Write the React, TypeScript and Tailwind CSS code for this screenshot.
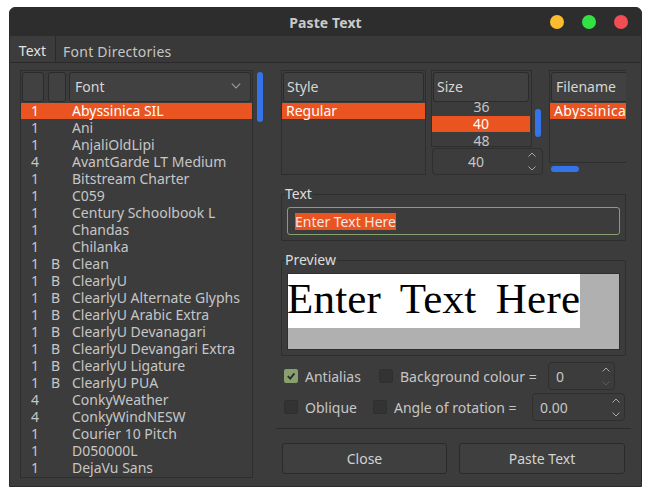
const fonts: [string, string, string][] = [
  ['1', '', 'Abyssinica SIL'],
  ['1', '', 'Ani'],
  ['1', '', 'AnjaliOldLipi'],
  ['4', '', 'AvantGarde LT Medium'],
  ['1', '', 'Bitstream Charter'],
  ['1', '', 'C059'],
  ['1', '', 'Century Schoolbook L'],
  ['1', '', 'Chandas'],
  ['1', '', 'Chilanka'],
  ['1', 'B', 'Clean'],
  ['1', 'B', 'ClearlyU'],
  ['1', 'B', 'ClearlyU Alternate Glyphs'],
  ['1', 'B', 'ClearlyU Arabic Extra'],
  ['1', 'B', 'ClearlyU Devanagari'],
  ['1', 'B', 'ClearlyU Devangari Extra'],
  ['1', 'B', 'ClearlyU Ligature'],
  ['1', 'B', 'ClearlyU PUA'],
  ['4', '', 'ConkyWeather'],
  ['4', '', 'ConkyWindNESW'],
  ['1', '', 'Courier 10 Pitch'],
  ['1', '', 'D050000L'],
  ['1', '', 'DejaVu Sans'],
];

const Chevron = ({ up, className }: { up?: boolean; className?: string }) => (
  <svg width="8" height="5" viewBox="0 0 8 5" fill="none" stroke="currentColor" strokeWidth="1" className={className}>
    <path d={up ? 'M.5 4.5 4 1 7.5 4.5' : 'M.5 .5 4 4 7.5 .5'} />
  </svg>
);

const Header = ({ label, className }: { label?: string; className: string }) => (
  <div className={`h-[30px] shrink-0 rounded-[3px] border border-[#2b2b2b] bg-[#414141] leading-[28px] text-[#d6d6d6] ${className}`}>
    {label}
  </div>
);

const Spin = ({ value, className, dim }: { value: string; className: string; dim?: boolean }) => (
  <div className={`flex items-center justify-between rounded-[4px] border border-[#2f2f2f] bg-[#3c3c3c] ${className}`}>
    <span>{value}</span>
    <div className="flex flex-col gap-[9px]">
      <Chevron up className="text-[#a8a8a8]" />
      <Chevron className={dim ? 'text-[#5c5c5c]' : 'text-[#a8a8a8]'} />
    </div>
  </div>
);

const Check = ({ on }: { on?: boolean }) => (
  <div className={`flex h-[14px] w-[14px] shrink-0 items-center justify-center rounded-[2px] ${on ? 'bg-[#87a06e]' : 'border border-[#2f2f2f] bg-[#333333]'}`}>
    {on && (
      <svg width="10" height="10" viewBox="0 0 10 10" fill="none" stroke="#2a2a2a" strokeWidth="1.8">
        <path d="M1.8 5.2 4.2 7.6 8.4 2.4" />
      </svg>
    )}
  </div>
);

const Group = ({ title, className, children }: { title: string; className: string; children: React.ReactNode }) => (
  <div className={`relative rounded-[1px] border border-[#2e2e2e] ${className}`}>
    <span className="absolute -top-[9px] left-[3px] bg-[#3c3c3c] pr-[1px] text-[14px] leading-[16px] text-[#dcdcdc]">{title}</span>
    {children}
  </div>
);

export default function App() {
  return (
    <div className="h-[496px] w-[651px] bg-white pt-[7px] pl-[9px] font-['Noto_Sans',sans-serif] text-[14px] text-[#c6c6c6]">
      <div className="flex h-[480px] w-[633px] flex-col overflow-hidden rounded-t-[6px] border border-[#2a2a2a] bg-[#3c3c3c]">
        {/* title bar */}
        <div className="relative flex h-[28px] shrink-0 items-center justify-center bg-[#2d2d2d] text-[14px] font-bold tracking-[0.1px] text-[#c9c9c9]">
          Paste Text
          <div className="absolute top-[7px] right-[13px] flex gap-[18px]">
            <span className="h-[14px] w-[14px] rounded-full bg-[#fdbc2e]" />
            <span className="h-[14px] w-[14px] rounded-full bg-[#32e143]" />
            <span className="h-[14px] w-[14px] rounded-full bg-[#f24d52]" />
          </div>
        </div>

        {/* tabs */}
        <div className="flex h-[27px] shrink-0 border-b border-[#2a2a2a] bg-[#393939]">
          <div className="w-[46px] border-r border-[#2a2a2a] bg-[#3c3c3c] pt-[5px] text-center leading-[20px] tracking-[0.2px] text-[#e2e2e2]">Text</div>
          <div className="pt-[6px] pl-[7px] leading-[20px] tracking-[0.25px]">Font Directories</div>
        </div>

        <div className="flex flex-1 pt-[7px]">
          {/* font list */}
          <div className="ml-[10px] h-[408px] w-[233px] shrink-0 overflow-hidden border border-[#2e2e2e]">
            <div className="flex p-[1px]">
              <Header className="w-[22px]" />
              <Header className="ml-[4px] w-[18px]" />
              <div className="relative ml-[3px] flex-1">
                <Header label="Font" className="w-full pl-[5px]" />
                <Chevron className="absolute top-[11px] right-[10px] h-[6px] w-[10px] text-[#9a9a9a]" />
              </div>
            </div>
            {fonts.map((f, i) => (
              <div key={f[2]} className={`mb-px flex h-[16px] items-center leading-[16px] ${i === 0 ? 'bg-[#e95420] text-white' : ''}`}>
                <span className="w-[30px] shrink-0 pl-[10px]">{f[0]}</span>
                <span className="w-[21px] shrink-0">{f[1]}</span>
                <span className="whitespace-nowrap">{f[2]}</span>
              </div>
            ))}
          </div>
          <div className="mt-[2px] ml-[4px] h-[50px] w-[6px] shrink-0 rounded-full bg-[#3574e8]" />

          {/* right column */}
          <div className="ml-[13px] flex w-[355px] shrink-0 flex-col">
            <div className="flex h-[105px] shrink-0 pl-[5px]">
              <div className="h-full w-[145px] shrink-0 overflow-hidden border border-[#2e2e2e]">
                <div className="p-[1px]">
                  <Header label="Style" className="w-full pl-[3px]" />
                </div>
                <div className="h-[16px] bg-[#e95420] pl-[4px] leading-[16px] text-white">Regular</div>
              </div>

              <div className="ml-[5px] flex w-[112px] shrink-0 flex-col">
                <div className="flex">
                  <div className="h-[77px] w-[101px] shrink-0 overflow-hidden border border-[#2e2e2e] text-center">
                    <div className="p-[1px] pr-[2px]">
                      <Header label="Size" className="w-full pl-[3px] text-left" />
                    </div>
                    <div className="h-[13px] leading-[8px]">36</div>
                    <div className="mr-[1px] h-[16px] bg-[#e95420] leading-[16px] text-white">40</div>
                    <div className="h-[14px] leading-[18px]">48</div>
                  </div>
                  <div className="mt-[39px] ml-[3px] h-[28px] w-[6px] rounded-full bg-[#3574e8]" />
                </div>
                <Spin value="40" className="mt-[1px] ml-[1px] h-[27px] pr-[6px] pl-[35px]" />
              </div>

              <div className="ml-[6px] flex w-[77px] shrink-0 flex-col">
                <div className="h-[93px] overflow-hidden border-y border-l border-[#2e2e2e]">
                  <div className="w-[90px] p-[1px]">
                    <Header label="Filename" className="w-[88px] pl-[4px]" />
                  </div>
                  <div className="h-[16px] overflow-hidden bg-[#e95420] pl-[4px] leading-[16px] tracking-[0.4px] whitespace-nowrap text-white">AbyssinicaSIL-R.ttf</div>
                </div>
                <div className="mt-[3px] ml-[2px] h-[6px] w-[28px] rounded-full bg-[#3574e8]" />
              </div>
            </div>

            <Group title="Text" className="mx-[5px] mt-[19px] h-[47px] shrink-0 px-[5px] pt-[12px]">
              <div className="flex h-[28px] items-center rounded-[3px] border border-[#86a070] pl-[7px]">
                <span className="bg-[#e95420] leading-[17px] text-[#f6e8e2]">Enter Text Here</span>
              </div>
            </Group>

            <Group title="Preview" className="mx-[5px] mt-[19px] h-[96px] shrink-0 px-[6px] pt-[13px]">
              <div className="h-[75px] bg-[#b0b0b0] outline outline-[#2e2e2e]">
                <div className="h-[54px] w-[292px] overflow-hidden bg-white indent-[-1px] font-['Liberation_Serif',serif] text-[43px] leading-[49px] tracking-[0.2px] whitespace-nowrap text-black [word-spacing:8.5px]">
                  Enter Text Here
                </div>
              </div>
            </Group>

            <div className="mt-[6px] flex h-[28px] shrink-0 items-center pl-[8px]">
              <Check on />
              <span className="ml-[7px] w-[74px]">Antialias</span>
              <Check />
              <span className="ml-[7px] w-[148px]">Background colour =</span>
              <Spin value="0" dim className="h-[28px] w-[67px] pr-[4px] pl-[7px]" />
            </div>
            <div className="mt-[3px] flex h-[28px] shrink-0 items-center pl-[8px]">
              <Check />
              <span className="ml-[7px] w-[68px]">Oblique</span>
              <Check />
              <span className="ml-[7px] w-[138px]">Angle of rotation =</span>
              <Spin value="0.00" className="h-[28px] w-[93px] pr-[4px] pl-[7px]" />
            </div>

            <div className="mt-[7px] h-px shrink-0 bg-[#2a2a2a]" />

            <div className="mt-[14px] flex gap-[12px] pl-[6px]">
              <div className="flex h-[31px] w-[165px] items-center justify-center rounded-[3px] border border-[#2a2a2a] bg-[#3f3f3f] text-[#d2d2d2]">Close</div>
              <div className="flex h-[31px] w-[166px] items-center justify-center rounded-[3px] border border-[#2a2a2a] bg-[#3f3f3f] text-[#d2d2d2]">Paste Text</div>
            </div>
          </div>
        </div>
      </div>
    </div>
  );
}
